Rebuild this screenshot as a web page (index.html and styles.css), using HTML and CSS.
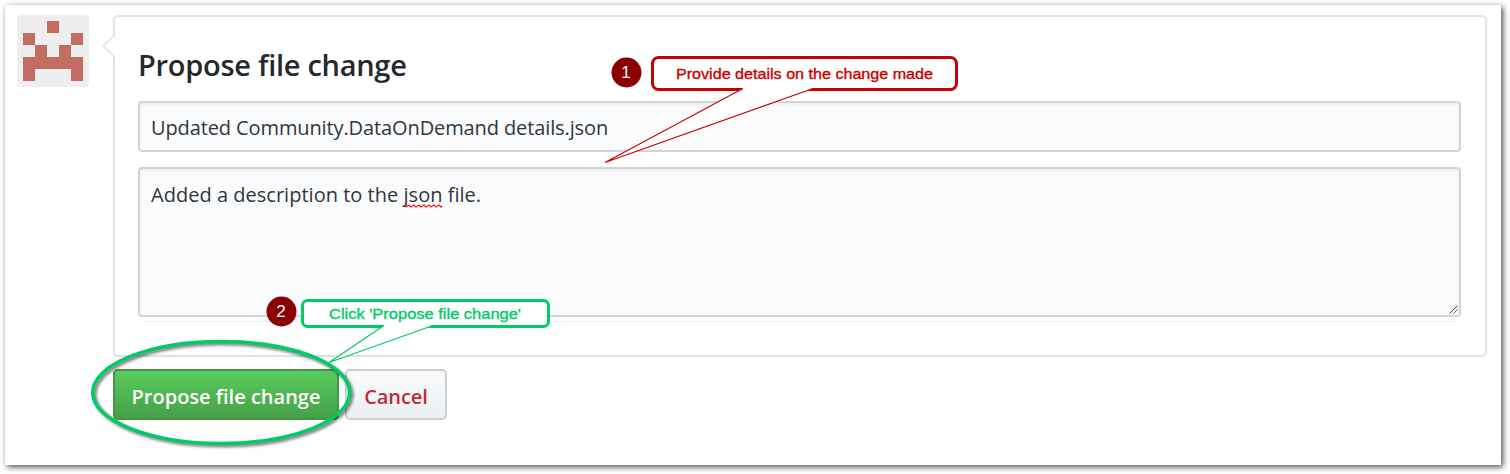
FILE: index.html
```html
<!DOCTYPE html>
<html lang="en">
<head>
<meta charset="utf-8">
<title>Propose file change</title>
<link rel="stylesheet" href="styles.css">
</head>
<body>
<main class="sheet">
  <svg class="avatar" viewBox="0 0 72 72" aria-hidden="true">
    <rect width="72" height="72" rx="4" fill="#eeeeee"/>
    <path fill="#c36c61" d="M30 6h12v12H30zM6 18h12v12H6zM54 18h12v12H54zM18 30h12v12H18zM42 30h12v12H42zM6 42h60v24H54V54H18v12H6z"/>
  </svg>
  <form class="commit">
    <section class="box">
      <svg class="caret" viewBox="0 0 13 24" aria-hidden="true"><path d="M13 0.5L1 12L13 23.5" fill="#fff" stroke="#dfdfe5" stroke-width="1.3"/></svg>
      <h1 class="title"><span class="title-text">Propose file change</span></h1>
      <div class="field summary"><span class="summary-text">Updated Community.DataOnDemand details.json</span></div>
      <div class="field description">
        <span class="description-text">Added a description to the <span class="misspelt">json<svg class="squiggle" viewBox="0 0 40 4" aria-hidden="true"><path d="M0 1l2 2 3-2 2 2 3-2 2 2 3-2 2 2 3-2 2 2 3-2 2 2 3-2 2 2 3-2 2 2 1-1" fill="none" stroke="#ef1c24" stroke-width="1.3"/></svg></span> file.</span>
        <svg class="grip" viewBox="0 0 9 9" aria-hidden="true"><path d="M0.5 8.5L8.5 .5M4.5 8.5L8.5 4.5" stroke="#555" stroke-width="1"/></svg>
      </div>
      <div class="rule"></div>
    </section>
    <div class="actions">
      <button type="button" class="btn primary"><span class="primary-text">Propose file change</span></button>
      <button type="button" class="btn cancel"><span class="cancel-text">Cancel</span></button>
    </div>
  </form>
</main>
<svg class="annotations" viewBox="0 0 1510 474">
  <rect x="652.5" y="57.5" width="304" height="32" rx="6" fill="#fff" stroke="#c80000" stroke-width="3"/>
  <path d="M742 87L742 89L605 162L812 89V87z" fill="#fff"/>
  <path d="M743 88.5L605 162.5L813 88.5" fill="none" stroke="#c80000" stroke-width="1.1"/>
  <circle cx="626.5" cy="72.5" r="15" fill="#8b0000"/>
  <text class="num" x="626" y="78" text-anchor="middle">1</text>
  <text class="note red" x="676" y="79" textLength="257" lengthAdjust="spacingAndGlyphs">Provide details on the change made</text>

  <ellipse class="ring" cx="221.2" cy="392.5" rx="128.5" ry="51"/>
  <rect x="302.5" y="300.5" width="246" height="26" rx="5" fill="#fff" stroke="#00cc66" stroke-width="3"/>
  <path d="M384 324V326L329 362.5L431 326V324z" fill="#fff"/>
  <path d="M384 325.5L329 362.5L433 325.5" fill="none" stroke="#00cc66" stroke-width="1.2"/>
  <circle cx="281.5" cy="311.5" r="15" fill="#8b0000"/>
  <text class="num" x="281" y="317" text-anchor="middle">2</text>
  <text class="note green" x="329" y="319" textLength="192" lengthAdjust="spacingAndGlyphs">Click 'Propose file change'</text>
</svg>
</body>
</html>
```
FILE: styles.css
```css
* { box-sizing: border-box; }
body {
  margin: 0;
  padding: 5px 9px 9px 5px;
  height: 474px;
  overflow: hidden;
  background: #fff;
  font-family: "Open Sans", "Noto Sans", sans-serif;
  color: #24292e;
}
.sheet {
  display: flex;
  align-items: flex-start;
  gap: 24px;
  height: 460px;
  padding: 10px 14px 0 12px;
  background: #fff;
  box-shadow: 2px 2px 6px rgba(0, 0, 0, .7);
}
.avatar { flex: none; width: 72px; height: 72px; }
.commit { flex: 1; min-width: 0; }
.box {
  position: relative;
  height: 342px;
  padding: 21px 24px 0 23px;
  border: 2px solid #e1e1e8;
  border-radius: 5px;
}
.caret { position: absolute; left: -13px; top: 17px; width: 13px; height: 24px; }
.title {
  margin: 0 0 9px;
  height: 54px;
  line-height: 54px;
  font-size: 29px;
  font-weight: 600;
  white-space: nowrap;
}
.title-text { letter-spacing: -.28px; }
.field {
  border: 2px solid #d1d5da;
  border-radius: 4px;
  background: #fafbfc;
  box-shadow: inset 0 2px 3px rgba(27, 31, 35, .06);
  padding: 0 11px;
  font-size: 20px;
  color: #2f363d;
  white-space: nowrap;
}
.summary { height: 51px; line-height: 49px; }
.summary-text { letter-spacing: -.11px; }
.description { position: relative; height: 150px; margin-top: 15px; padding-top: 10px; line-height: 32px; }
.description-text { letter-spacing: .02px; }
.misspelt { position: relative; }
.squiggle { position: absolute; left: 0; bottom: 0; width: 40px; height: 4px; }
.grip { position: absolute; right: 1px; bottom: 1px; width: 9px; height: 9px; }
.rule { height: 1px; margin: 4px 3px 0; background: #f0f0f6; }
.actions { display: flex; gap: 6px; margin-top: 12px; }
.btn {
  height: 51px;
  padding: 4px 0 0;
  border: 2px solid #cdcfd2;
  border-radius: 5px;
  font: 600 20px/43px "Open Sans", "Noto Sans", sans-serif;
  white-space: nowrap;
}
.primary {
  width: 226px;
  color: #fff;
  border-color: #43964a;
  background: linear-gradient(#59cc5d, #46a048);
}
.cancel {
  width: 102px;
  color: #bd2c38;
  background: linear-gradient(#fafbfc, #ebf0f4);
}
.cancel-text { letter-spacing: -.1px; }
.annotations { position: absolute; left: 0; top: 0; width: 1510px; height: 474px; pointer-events: none; }
.num { font: 17px "Liberation Sans", Arial, sans-serif; fill: #fff; }
.note { font: 15px "Liberation Sans", Arial, sans-serif; stroke-width: .35px; }
.red { fill: #c80000; stroke: #c80000; }
.green { fill: #00cc66; stroke: #00cc66; }
.ring { fill: none; stroke: #00cc66; stroke-width: 3.5px; filter: drop-shadow(2px 2px 1.5px rgba(0, 0, 0, .55)); }
```
